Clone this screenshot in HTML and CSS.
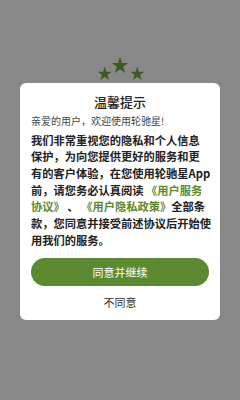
FILE: index.html
```html
<!DOCTYPE html>
<html lang="zh-CN">
<head>
<meta charset="UTF-8">
<meta name="viewport" content="width=device-width, initial-scale=1.0">
<title>温馨提示</title>
<link rel="stylesheet" href="styles.css">
</head>
<body>

<div class="stars">
    <svg width="50" height="27" viewBox="0 0 50 27">
        <g fill="#3b5a1e">
            <polygon transform="translate(25 9.8) scale(8.8)" points="0,-1 0.225,-0.309 0.951,-0.309 0.363,0.118 0.588,0.809 0,0.382 -0.588,0.809 -0.363,0.118 -0.951,-0.309 -0.225,-0.309"/>
            <polygon transform="translate(9.7 18) scale(7.4)" points="0,-1 0.225,-0.309 0.951,-0.309 0.363,0.118 0.588,0.809 0,0.382 -0.588,0.809 -0.363,0.118 -0.951,-0.309 -0.225,-0.309"/>
            <polygon transform="translate(42.3 18) scale(7.4)" points="0,-1 0.225,-0.309 0.951,-0.309 0.363,0.118 0.588,0.809 0,0.382 -0.588,0.809 -0.363,0.118 -0.951,-0.309 -0.225,-0.309"/>
        </g>
    </svg>
</div>

<div class="dialog">
    <h2 class="dialog-title">温馨提示</h2>
    <p class="greeting">亲爱的用户，欢迎使用轮驰星!</p>
    <p class="notice">我们非常重视您的隐私和个人信息<br>保护，为向您提供更好的服务和更<br>有的客户体验，在您使用轮驰星App<br>前，请您务必认真阅读 <a href="#" class="link">《用户服务<br>协议》</a> 、 <a href="#" class="link">《用户隐私政策》</a>全部条<br>款，您同意并接受前述协议后开始使<br>用我们的服务。</p>
    <button class="btn-agree">同意并继续</button>
    <div class="btn-refuse">不同意</div>
</div>

</body>
</html>
```

FILE: styles.css
```css
body {
    margin: 0;
    background-color: #888888;
    font-family: "Noto Sans CJK SC", "Noto Sans", sans-serif;
}
.stars {
    padding-top: 56px;
    text-align: center;
    line-height: 0;
}
.stars svg {
    display: inline-block;
}
.dialog {
    margin: 0 20px;
    background-color: #fff;
    border-radius: 6px;
    padding: 10px 11px 10px;
}
.dialog-title {
    margin: 0;
    font-size: 13px;
    line-height: 17px;
    font-weight: 500;
    text-align: center;
    color: #222;
}
.greeting {
    margin: 3px 0 0;
    font-size: 10px;
    line-height: 16px;
    color: #444;
}
.notice {
    margin: 2.7px 0 0;
    font-size: 11.25px;
    line-height: 16.67px;
    font-weight: 700;
    color: #222;
    white-space: nowrap;
    text-spacing-trim: space-all;
}
.link {
    color: #5b8a32;
    text-decoration: none;
}
.btn-agree {
    display: block;
    width: 100%;
    height: 28px;
    margin-top: 10px;
    border: none;
    border-radius: 14px;
    background-color: #5b8a32;
    color: #fff;
    font-family: inherit;
    font-size: 11px;
}
.btn-refuse {
    margin-top: 8px;
    font-size: 11px;
    line-height: 16px;
    text-align: center;
    color: #333;
}
```
